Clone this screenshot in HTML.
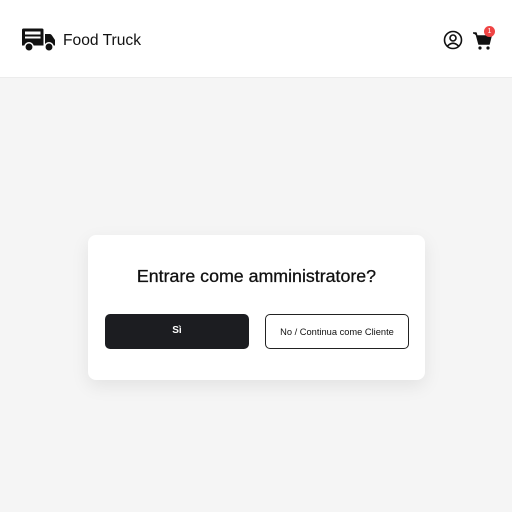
<!DOCTYPE html>
<html><head><style>
body{margin:0;width:512px;height:512px;background:#f5f5f5;font-family:"Liberation Sans",sans-serif;position:relative;overflow:hidden}
.hdr{position:absolute;left:0;top:0;width:512px;height:77px;background:#fff;border-bottom:1px solid #ececec}
.brand{position:absolute;left:63px;top:32px;font-size:15.6px;color:#111}
.badge{position:absolute;left:484px;top:26px;width:11px;height:11px;border-radius:50%;background:#ef4444;color:#fff;font-size:7px;text-align:center;line-height:11px}
.dlg{position:absolute;left:88px;top:235px;width:337px;height:145px;background:#fff;border-radius:8px;box-shadow:0 6px 18px rgba(0,0,0,0.08)}
.t{position:absolute;width:337px;top:266px;text-align:center;font-size:17.8px;color:#111;-webkit-text-stroke:0.3px #111}
.b{position:absolute;top:314px;height:35px;width:144px;border-radius:5px;box-sizing:border-box;font-size:9.3px;text-align:center;line-height:34px}
</style></head><body>
<div class="hdr"></div>
<svg style="position:absolute;left:21px;top:28px" width="35" height="24" viewBox="0 0 35 24">
<path d="M1 2 Q1 0.5 2.5 0.5 H21 Q22.5 0.5 22.5 2 V17.5 H1 Z" fill="#111"/>
<rect x="4" y="3.5" width="15.5" height="3" fill="#fff"/><rect x="4" y="8.5" width="15.5" height="2" fill="#fff"/>
<path d="M24 6 H29 Q30 6 31 7.5 L34 12 V17.5 H24 Z" fill="#111"/>
<circle cx="8" cy="19" r="4.2" fill="#111" stroke="#fff" stroke-width="1.5"/>
<circle cx="28" cy="19" r="4.2" fill="#111" stroke="#fff" stroke-width="1.5"/>
</svg>
<div class="brand">Food Truck</div>
<svg style="position:absolute;left:443px;top:30px" width="20" height="20" viewBox="0 0 20 20" fill="none" stroke="#111" stroke-width="1.6">
<circle cx="10" cy="10" r="8.5"/><circle cx="10" cy="8" r="3"/><path d="M4.5 16 Q10 10.5 15.5 16"/></svg>
<svg style="position:absolute;left:472px;top:31px" width="20" height="20" viewBox="0 0 20 20">
<path d="M1 2 H4 L7 13 H17 L19 5 H5" fill="#111" stroke="#111" stroke-width="1.6" stroke-linejoin="round"/>
<circle cx="8" cy="17" r="1.6" fill="#111"/><circle cx="16" cy="17" r="1.6" fill="#111"/></svg>
<div class="badge">1</div>
<div class="dlg"></div>
<div class="t" style="left:88px">Entrare come amministratore?</div>
<div class="b" style="left:105px;background:#1c1d21;color:#fff;font-weight:bold;font-size:10px">Sì</div>
<div class="b" style="left:265px;border:1px solid #222;background:#fff;color:#111">No / Continua come Cliente</div>
</body></html>
